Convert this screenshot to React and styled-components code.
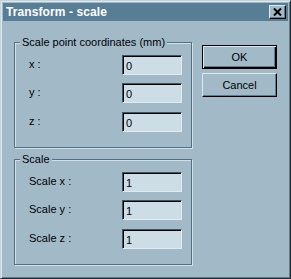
import React from 'react';
import styled, { createGlobalStyle } from 'styled-components';

const Global = createGlobalStyle`
  html, body {
    margin: 0;
    padding: 0;
    background: #a2bac8;
  }
`;

const Window = styled.div`
  box-sizing: border-box;
  width: 291px;
  height: 279px;
  padding: 2px;
  background: #a2bac8;
  border: 1px solid;
  border-color: #c2d4de #1e2a32 #1e2a32 #c2d4de;
  box-shadow: inset 1px 1px 0 #dce8ee, inset -1px -1px 0 #5e7c8c;
  display: flex;
  flex-direction: column;
  font-family: 'Liberation Sans', Arial, sans-serif;
  font-size: 11px;
  color: #000;
`;

const TitleBar = styled.div`
  height: 18px;
  flex: none;
  background: #587e96;
  display: flex;
  align-items: center;
  justify-content: space-between;
  padding: 0 2px 0 3px;
`;

const Title = styled.span`
  color: #fff;
  font-weight: bold;
  font-size: 12px;
  letter-spacing: 0.1px;
`;

const CloseBtn = styled.div`
  box-sizing: border-box;
  width: 17px;
  height: 14px;
  background: #a2bac8;
  border: 1px solid;
  border-color: #dce8ee #000 #000 #dce8ee;
  box-shadow: inset -1px -1px 0 #5e7c8c;
  display: flex;
  align-items: center;
  justify-content: center;
`;

const Content = styled.div`
  display: flex;
  padding: 0 11px;
  gap: 10px;
`;

const LeftCol = styled.div`
  display: flex;
  flex-direction: column;
  gap: 11px;
  padding-top: 21px;
`;

const RightCol = styled.div`
  display: flex;
  flex-direction: column;
  gap: 4px;
  padding-top: 24px;
`;

const Group = styled.div`
  position: relative;
  box-sizing: border-box;
  width: 178px;
  height: 106px;
  border: 1px solid #52707f;
  box-shadow: 1px 1px 0 #d2e0e8, inset 1px 1px 0 #d2e0e8;
  padding: 11.5px 9px 0 14px;
  display: grid;
  grid-template-columns: 93px 60px;
  grid-auto-rows: 20px;
  row-gap: 8.5px;
  align-items: center;
`;

const Legend = styled.span`
  position: absolute;
  top: -7px;
  left: 5px;
  padding: 0 2px;
  background: #a2bac8;
  line-height: 13px;
`;

const Label = styled.span`
  line-height: 13px;
  margin-top: -1px;
`;

const Field = styled.div`
  box-sizing: border-box;
  height: 20px;
  background: #cddde5;
  border: 1px solid;
  border-color: #3e5664 #e0eaf0 #e0eaf0 #3e5664;
  box-shadow: inset 1px 1px 0 #000;
  padding: 3px 0 0 3px;
  line-height: 14px;
`;

const Button = styled.div`
  box-sizing: border-box;
  width: 75px;
  height: 24px;
  background: #a2bac8;
  display: flex;
  align-items: center;
  justify-content: center;
  border: 1px solid;
  border-color: ${(p) => (p.$default ? '#000' : '#dce8ee #000 #000 #dce8ee')};
  box-shadow: ${(p) =>
    p.$default
      ? 'inset 1px 1px 0 #dce8ee, inset -1px -1px 0 #000, inset -2px -2px 0 #5e7c8c'
      : 'inset -1px -1px 0 #5e7c8c'};
`;

const rows1 = [
  ['x :', '0'],
  ['y :', '0'],
  ['z :', '0'],
];

const rows2 = [
  ['Scale x :', '1'],
  ['Scale y :', '1'],
  ['Scale z :', '1'],
];

function GroupBox({ title, rows }) {
  return (
    <Group>
      <Legend>{title}</Legend>
      {rows.map(([l, v]) => (
        <React.Fragment key={l}>
          <Label>{l}</Label>
          <Field>{v}</Field>
        </React.Fragment>
      ))}
    </Group>
  );
}

export default function App() {
  return (
    <>
      <Global />
      <Window>
        <TitleBar>
          <Title>Transform - scale</Title>
          <CloseBtn>
            <svg width="9" height="8" viewBox="0 0 9 8">
              <path d="M1 0.5 L8 7.5 M8 0.5 L1 7.5" stroke="#000" strokeWidth="2" />
            </svg>
          </CloseBtn>
        </TitleBar>
        <Content>
          <LeftCol>
            <GroupBox title="Scale point coordinates (mm)" rows={rows1} />
            <GroupBox title="Scale" rows={rows2} />
          </LeftCol>
          <RightCol>
            <Button $default>OK</Button>
            <Button>Cancel</Button>
          </RightCol>
        </Content>
      </Window>
    </>
  );
}
